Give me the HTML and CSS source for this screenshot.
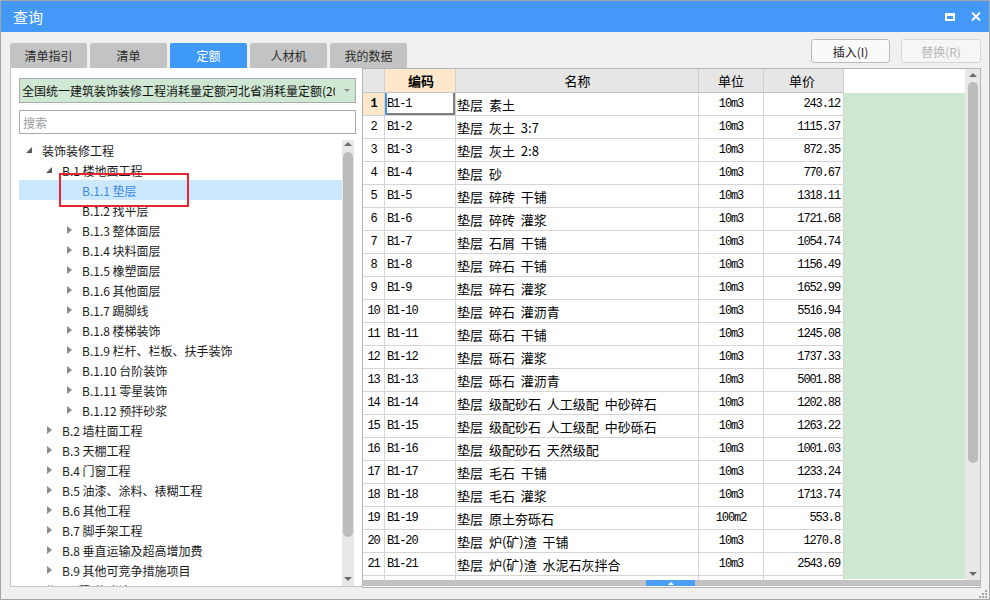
FILE: index.html
```html
<!DOCTYPE html>
<html lang="zh-CN">
<head>
<meta charset="utf-8">
<title>查询</title>
<link rel="stylesheet" href="styles.css">
</head>
<body>
<div class="window">
  <div class="titlebar">
    <span class="title">查询</span>
    <span class="max"></span>
    <svg class="close" width="10" height="9" viewBox="0 0 10 9"><path d="M1 0.5 L9 8.5 M9 0.5 L1 8.5" stroke="#fff" stroke-width="2" fill="none"/></svg>
  </div>
  <div class="toolbar">
    <div class="tabs">
      <div class="tab">清单指引</div>
      <div class="tab">清单</div>
      <div class="tab active">定额</div>
      <div class="tab">人材机</div>
      <div class="tab">我的数据</div>
    </div>
    <div class="buttons">
      <div class="btn">插入(I)</div>
      <div class="btn disabled">替换(R)</div>
    </div>
  </div>
  <div class="main">
    <div class="left">
      <div class="combo"><span class="combo-text">全国统一建筑装饰装修工程消耗量定额河北省消耗量定额(2012)</span><span class="combo-arrow"></span></div>
      <div class="search">搜索</div>
      <div class="tree-area">
        <div class="tree">
          <div class="trow l0"><span class="ar"><i class="exp"></i></span>装饰装修工程</div>
          <div class="trow l1"><span class="ar"><i class="exp"></i></span>B.1 楼地面工程</div>
          <div class="trow l2 sel"><span class="ar"></span>B.1.1 垫层</div>
          <div class="trow l2"><span class="ar"></span>B.1.2 找平层</div>
          <div class="trow l2"><span class="ar"><i class="col"></i></span>B.1.3 整体面层</div>
          <div class="trow l2"><span class="ar"><i class="col"></i></span>B.1.4 块料面层</div>
          <div class="trow l2"><span class="ar"><i class="col"></i></span>B.1.5 橡塑面层</div>
          <div class="trow l2"><span class="ar"><i class="col"></i></span>B.1.6 其他面层</div>
          <div class="trow l2"><span class="ar"><i class="col"></i></span>B.1.7 踢脚线</div>
          <div class="trow l2"><span class="ar"><i class="col"></i></span>B.1.8 楼梯装饰</div>
          <div class="trow l2"><span class="ar"><i class="col"></i></span>B.1.9 栏杆、栏板、扶手装饰</div>
          <div class="trow l2"><span class="ar"><i class="col"></i></span>B.1.10 台阶装饰</div>
          <div class="trow l2"><span class="ar"><i class="col"></i></span>B.1.11 零星装饰</div>
          <div class="trow l2"><span class="ar"><i class="col"></i></span>B.1.12 预拌砂浆</div>
          <div class="trow l1"><span class="ar"><i class="col"></i></span>B.2 墙柱面工程</div>
          <div class="trow l1"><span class="ar"><i class="col"></i></span>B.3 天棚工程</div>
          <div class="trow l1"><span class="ar"><i class="col"></i></span>B.4 门窗工程</div>
          <div class="trow l1"><span class="ar"><i class="col"></i></span>B.5 油漆、涂料、裱糊工程</div>
          <div class="trow l1"><span class="ar"><i class="col"></i></span>B.6 其他工程</div>
          <div class="trow l1"><span class="ar"><i class="col"></i></span>B.7 脚手架工程</div>
          <div class="trow l1"><span class="ar"><i class="col"></i></span>B.8 垂直运输及超高增加费</div>
          <div class="trow l1"><span class="ar"><i class="col"></i></span>B.9 其他可竞争措施项目</div>
          <div class="trow l0"><span class="ar"></span>附录工程(仿建计价)</div>
        </div>
        <div class="tscroll">
          <div class="sarea top-s"><i class="up"></i></div>
          <div class="thumb tthumb"></div>
          <div class="sspace"></div>
          <div class="sarea bot-s"><i class="down"></i></div>
        </div>
      </div>
    </div>
    <div class="grid-panel">
      <div class="grid-main">
        <div class="grid">
          <div class="grow head">
            <div class="c-n"></div>
            <div class="c-code hl"><b>编码</b></div>
            <div class="c-name">名称</div>
            <div class="c-unit">单位</div>
            <div class="c-price">单价</div>
          </div>
          <div class="grow"><div class="c-n cur">1</div><div class="c-code focus">B1-1</div><div class="c-name">垫层 素土</div><div class="c-unit">10m3</div><div class="c-price">243.12</div></div>
          <div class="grow"><div class="c-n">2</div><div class="c-code">B1-2</div><div class="c-name">垫层 灰土 3:7</div><div class="c-unit">10m3</div><div class="c-price">1115.37</div></div>
          <div class="grow"><div class="c-n">3</div><div class="c-code">B1-3</div><div class="c-name">垫层 灰土 2:8</div><div class="c-unit">10m3</div><div class="c-price">872.35</div></div>
          <div class="grow"><div class="c-n">4</div><div class="c-code">B1-4</div><div class="c-name">垫层 砂</div><div class="c-unit">10m3</div><div class="c-price">770.67</div></div>
          <div class="grow"><div class="c-n">5</div><div class="c-code">B1-5</div><div class="c-name">垫层 碎砖 干铺</div><div class="c-unit">10m3</div><div class="c-price">1318.11</div></div>
          <div class="grow"><div class="c-n">6</div><div class="c-code">B1-6</div><div class="c-name">垫层 碎砖 灌浆</div><div class="c-unit">10m3</div><div class="c-price">1721.68</div></div>
          <div class="grow"><div class="c-n">7</div><div class="c-code">B1-7</div><div class="c-name">垫层 石屑 干铺</div><div class="c-unit">10m3</div><div class="c-price">1054.74</div></div>
          <div class="grow"><div class="c-n">8</div><div class="c-code">B1-8</div><div class="c-name">垫层 碎石 干铺</div><div class="c-unit">10m3</div><div class="c-price">1156.49</div></div>
          <div class="grow"><div class="c-n">9</div><div class="c-code">B1-9</div><div class="c-name">垫层 碎石 灌浆</div><div class="c-unit">10m3</div><div class="c-price">1652.99</div></div>
          <div class="grow"><div class="c-n">10</div><div class="c-code">B1-10</div><div class="c-name">垫层 碎石 灌沥青</div><div class="c-unit">10m3</div><div class="c-price">5516.94</div></div>
          <div class="grow"><div class="c-n">11</div><div class="c-code">B1-11</div><div class="c-name">垫层 砾石 干铺</div><div class="c-unit">10m3</div><div class="c-price">1245.08</div></div>
          <div class="grow"><div class="c-n">12</div><div class="c-code">B1-12</div><div class="c-name">垫层 砾石 灌浆</div><div class="c-unit">10m3</div><div class="c-price">1737.33</div></div>
          <div class="grow"><div class="c-n">13</div><div class="c-code">B1-13</div><div class="c-name">垫层 砾石 灌沥青</div><div class="c-unit">10m3</div><div class="c-price">5001.88</div></div>
          <div class="grow"><div class="c-n">14</div><div class="c-code">B1-14</div><div class="c-name">垫层 级配砂石 人工级配 中砂碎石</div><div class="c-unit">10m3</div><div class="c-price">1202.88</div></div>
          <div class="grow"><div class="c-n">15</div><div class="c-code">B1-15</div><div class="c-name">垫层 级配砂石 人工级配 中砂砾石</div><div class="c-unit">10m3</div><div class="c-price">1263.22</div></div>
          <div class="grow"><div class="c-n">16</div><div class="c-code">B1-16</div><div class="c-name">垫层 级配砂石 天然级配</div><div class="c-unit">10m3</div><div class="c-price">1001.03</div></div>
          <div class="grow"><div class="c-n">17</div><div class="c-code">B1-17</div><div class="c-name">垫层 毛石 干铺</div><div class="c-unit">10m3</div><div class="c-price">1233.24</div></div>
          <div class="grow"><div class="c-n">18</div><div class="c-code">B1-18</div><div class="c-name">垫层 毛石 灌浆</div><div class="c-unit">10m3</div><div class="c-price">1713.74</div></div>
          <div class="grow"><div class="c-n">19</div><div class="c-code">B1-19</div><div class="c-name">垫层 原土夯砾石</div><div class="c-unit">100m2</div><div class="c-price">553.8</div></div>
          <div class="grow"><div class="c-n">20</div><div class="c-code">B1-20</div><div class="c-name">垫层 炉(矿)渣 干铺</div><div class="c-unit">10m3</div><div class="c-price">1270.8</div></div>
          <div class="grow"><div class="c-n">21</div><div class="c-code">B1-21</div><div class="c-name">垫层 炉(矿)渣 水泥石灰拌合</div><div class="c-unit">10m3</div><div class="c-price">2543.69</div></div>
          <div class="grow"><div class="c-n">22</div><div class="c-code">B1-22</div><div class="c-name">垫层 炉(矿)渣 石灰拌合</div><div class="c-unit">10m3</div><div class="c-price">1890.52</div></div>
        </div>
        <div class="filler">
          <div class="filler-head"></div>
          <div class="filler-body"></div>
        </div>
        <div class="vscroll">
          <div class="sarea v-top"><i class="up"></i></div>
          <div class="thumb vthumb"></div>
          <div class="sspace"></div>
          <div class="sarea v-bot"><i class="down"></i></div>
        </div>
      </div>
      <div class="hscroll"><div class="hthumb"><i class="hup"></i></div></div>
    </div>
  </div>
  <div class="status">
    <svg class="grip" width="9" height="9" viewBox="0 0 9 9" fill="#a8a8a8">
      <rect x="7" y="1" width="2" height="2"/>
      <rect x="4" y="4" width="2" height="2"/><rect x="7" y="4" width="2" height="2"/>
      <rect x="1" y="7" width="2" height="2"/><rect x="4" y="7" width="2" height="2"/><rect x="7" y="7" width="2" height="2"/>
    </svg>
  </div>
  <div class="redbox"></div>
</div>
</body>
</html>
```

FILE: styles.css
```css
body {
  margin: 0;
  background: #ffffff;
}

.window {
  position: relative;
  width: 990px;
  height: 600px;
  box-sizing: border-box;
  border: 1px solid #a6a6a6;
  background: #f0f0f0;
  display: flex;
  flex-direction: column;
  font-family: "Noto Sans CJK SC", "Noto Sans", sans-serif;
  overflow: hidden;
}

/* title bar */
.titlebar {
  height: 31px;
  flex: none;
  background: #4498f7;
  display: flex;
  align-items: center;
  padding: 0 8px 0 12px;
  color: #fff;
}
.title {
  flex: 1;
  font-size: 15px;
  line-height: 20px;
}
.max {
  width: 10px;
  height: 8px;
  box-sizing: border-box;
  border: 2px solid #fff;
  border-top-width: 3px;
  margin-right: 16px;
}
.close {
  display: block;
}

/* toolbar */
.toolbar {
  height: 36px;
  flex: none;
  display: flex;
  padding: 0 8px 0 9px;
}
.tabs {
  display: flex;
  gap: 3px;
  margin-top: 11px;
}
.tab {
  width: 77px;
  height: 25px;
  background: #c3c3c3;
  border-radius: 2px 2px 0 0;
  font-size: 12px;
  color: #2a2a2a;
  display: flex;
  align-items: center;
  justify-content: center;
}
.tab.active {
  background: #3f99f7;
  color: #fff;
}
.buttons {
  margin-left: auto;
  display: flex;
  gap: 11px;
  margin-top: 7px;
}
.btn {
  width: 79px;
  height: 24px;
  box-sizing: border-box;
  border: 1px solid #bababa;
  border-radius: 3px;
  background: #fafafa;
  font-size: 12px;
  color: #222;
  display: flex;
  align-items: center;
  justify-content: center;
}
.btn.disabled {
  width: 80px;
  border-color: #d6d6d6;
  background: #f6f6f6;
  color: #b5b5b5;
}

/* main */
.main {
  height: 520px;
  flex: none;
  display: flex;
  padding-left: 9px;
}
.left {
  width: 352px;
  height: 519px;
  box-sizing: border-box;
  background: #fff;
  border-left: 1px solid #c6c6c6;
  border-bottom: 1px solid #c6c6c6;
  padding: 10px 6px 0 8px;
  display: flex;
  flex-direction: column;
}
.combo {
  height: 25px;
  flex: none;
  box-sizing: border-box;
  border: 1px solid #aaaaaa;
  background: #cfe8d3;
  display: flex;
  align-items: center;
  padding-left: 2px;
  font-size: 12px;
  color: #111;
}
.combo-text {
  flex: 1;
  white-space: nowrap;
  overflow: hidden;
}
.combo-arrow {
  width: 0;
  height: 0;
  border-left: 3px solid transparent;
  border-right: 3px solid transparent;
  border-top: 3px solid #8a8a8a;
  margin: 0 5px 0 9px;
}
.search {
  height: 24px;
  flex: none;
  margin-top: 7px;
  box-sizing: border-box;
  border: 1px solid #aaaaaa;
  padding-left: 3px;
  font-size: 12px;
  color: #9c9c9c;
  display: flex;
  align-items: center;
}
.tree-area {
  flex: 1;
  min-height: 0;
  margin-top: 6px;
  display: flex;
}
.tree {
  flex: 1;
  overflow: hidden;
}
.trow {
  height: 20px;
  display: flex;
  align-items: center;
  font-size: 12px;
  color: #1b1b1b;
  white-space: nowrap;
}
.trow.l0 { padding-left: 4px; }
.trow.l1 { padding-left: 24px; }
.trow.l2 { padding-left: 44px; }
.trow.sel {
  background: #cce8ff;
  color: #3a88e0;
}
.ar {
  width: 12px;
  height: 20px;
  margin-right: 7px;
  display: flex;
  align-items: center;
  justify-content: center;
  flex: none;
}
.exp {
  width: 0;
  height: 0;
  border-left: 6px solid transparent;
  border-bottom: 6px solid #5a5a5a;
}
.col {
  width: 0;
  height: 0;
  border-top: 4px solid transparent;
  border-bottom: 4px solid transparent;
  border-left: 5px solid #8c8c8c;
}

/* scrollbars */
.tscroll {
  width: 12px;
  margin-right: 2px;
  background: #e8e8e8;
  display: flex;
  flex-direction: column;
  align-items: center;
}
.sarea {
  display: flex;
  align-items: center;
  justify-content: center;
  flex: none;
}
.top-s { height: 8px; }
.bot-s { height: 14px; }
.sspace { flex: 1; }
.thumb {
  background: #bcbcbc;
  border-radius: 5px;
  flex: none;
}
.tthumb {
  width: 10px;
  height: 385px;
  margin-top: 4px;
}
.up {
  width: 0;
  height: 0;
  border-left: 4px solid transparent;
  border-right: 4px solid transparent;
  border-bottom: 4px solid #6c6c6c;
}
.down {
  width: 0;
  height: 0;
  border-left: 4px solid transparent;
  border-right: 4px solid transparent;
  border-top: 4px solid #6c6c6c;
}

/* grid panel */
.grid-panel {
  width: 619px;
  height: 520px;
  box-sizing: border-box;
  border: 1px solid #b5b5b5;
  background: #fff;
  display: flex;
  flex-direction: column;
}
.grid-main {
  height: 511px;
  flex: none;
  display: flex;
}
.grid {
  width: 481px;
  flex: none;
  overflow: hidden;
}
.grow {
  display: grid;
  grid-template-columns: 22px 71px 243px 65px 80px;
  height: 23px;
}
.grow.head {
  height: 24px;
}
.grow > div {
  box-sizing: border-box;
  border-right: 1px solid #d4d4d4;
  border-bottom: 1px solid #d4d4d4;
  display: flex;
  align-items: center;
  white-space: nowrap;
  overflow: hidden;
  color: #000;
}
.head > div {
  background: #e6e6e6;
  border-bottom-color: #c4c4c4;
  border-right-color: #cfcfcf;
  justify-content: center;
  font-family: "Noto Sans CJK SC", sans-serif;
  font-size: 13px;
  letter-spacing: 0;
}
.head > div.hl {
  background: #fde8cc;
}
.mono,
.c-n,
.c-code,
.c-unit,
.c-price {
  font-family: "Liberation Mono", monospace;
  font-size: 12px;
  letter-spacing: -1.1px;
}
.c-n {
  justify-content: center;
}
.c-n.cur {
  background: #fde8cc;
  font-weight: bold;
}
.c-code {
  padding-left: 2px;
}
.c-code.focus {
  box-shadow: inset 2px 0 0 #4a91e8, inset -2px 0 0 #7e7e7e, inset 0 -2px 0 #7e7e7e;
}
.c-name {
  padding-left: 1px;
  font-size: 13px;
  word-spacing: 3px;
}
.c-unit {
  justify-content: center;
}
.c-price {
  justify-content: flex-end;
  padding-right: 3px;
}
.filler {
  flex: 1;
  display: flex;
  flex-direction: column;
}
.filler-head {
  height: 24px;
  flex: none;
}
.filler-body {
  flex: 1;
  background: #cde8d0;
  margin-bottom: 1px;
}
.vscroll {
  width: 15px;
  flex: none;
  background: #e8e8e8;
  display: flex;
  flex-direction: column;
  align-items: center;
}
.v-top { height: 12px; }
.v-bot { height: 12px; }
.vthumb {
  width: 10px;
  height: 381px;
  margin-top: 1px;
}
.hscroll {
  height: 6px;
  flex: none;
  background: #c3c3c3;
  display: flex;
}
.hthumb {
  width: 49px;
  height: 6px;
  margin-left: 283px;
  background: #4a9ef6;
  display: flex;
  align-items: center;
  justify-content: center;
}
.hup {
  width: 0;
  height: 0;
  border-left: 3px solid transparent;
  border-right: 3px solid transparent;
  border-bottom: 3px solid #fff;
}

/* bottom */
.status {
  flex: 1;
  display: flex;
  justify-content: flex-end;
  align-items: flex-end;
  padding: 0 2px 1px 0;
}
.grip {
  display: block;
}

.redbox {
  position: absolute;
  left: 58px;
  top: 172px;
  width: 130px;
  height: 34px;
  box-sizing: border-box;
  border: 2px solid #e3262f;
}
```
